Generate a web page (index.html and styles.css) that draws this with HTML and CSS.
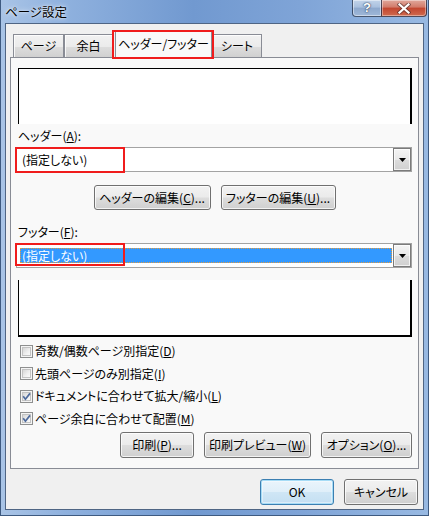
FILE: index.html
```html
<!DOCTYPE html>
<html lang="ja">
<head>
<meta charset="utf-8">
<title>ページ設定</title>
<link rel="stylesheet" href="styles.css">
</head>
<body>
<div class="window">
  <div class="titlebar">
    <span class="title">ページ設定</span>
    <div class="caption-btns">
      <div class="cbtn help">?</div>
      <div class="cbtn close">
        <svg width="14" height="11" viewBox="0 0 14 11"><path d="M2.5 1.5 L11.5 9.5 M11.5 1.5 L2.5 9.5" stroke="#3a2020" stroke-width="4" stroke-linecap="square" opacity="0.55"/><path d="M2.5 1.5 L11.5 9.5 M11.5 1.5 L2.5 9.5" stroke="#fff" stroke-width="2.2" stroke-linecap="square"/></svg>
      </div>
    </div>
  </div>
  <div class="client">
    <div class="tabs">
      <div class="tab t1">ページ</div>
      <div class="tab t2">余白</div>
      <div class="tab selected">ヘッダー/フッター</div>
      <div class="tab t4">シート</div>
    </div>
    <div class="panel">
      <div class="preview preview-top"></div>
      <div class="label">ヘッダー(<u>A</u>):</div>
      <div class="combo">
        <span class="combo-text">(指定しない)</span>
        <span class="drop"><svg width="7" height="4" viewBox="0 0 7 4"><polygon points="0,0 7,0 3.5,4" fill="#000"/></svg></span>
      </div>
      <div class="edit-row">
        <div class="btn w117">ヘッダーの編集(<u>C</u>)...</div>
        <div class="btn w115">フッターの編集(<u>U</u>)...</div>
      </div>
      <div class="label label-footer">フッター(<u>F</u>):</div>
      <div class="combo">
        <span class="combo-sel">(指定しない)</span>
        <span class="drop"><svg width="7" height="4" viewBox="0 0 7 4"><polygon points="0,0 7,0 3.5,4" fill="#000"/></svg></span>
      </div>
      <div class="preview preview-bottom"></div>
      <div class="checks">
        <div class="check-row"><span class="cb"><span class="cb-in"></span></span><span>奇数/偶数ページ別指定(<u>D</u>)</span></div>
        <div class="check-row"><span class="cb"><span class="cb-in"></span></span><span>先頭ページのみ別指定(<u>I</u>)</span></div>
        <div class="check-row"><span class="cb"><span class="cb-in"></span><svg class="tick" width="13" height="13" viewBox="0 0 13 13"><path d="M3.2 6.3 L5.4 9.2 L10 3.4" fill="none" stroke="#4e6a9c" stroke-width="1.7"/></svg></span><span>ドキュメントに合わせて拡大/縮小(<u>L</u>)</span></div>
        <div class="check-row"><span class="cb"><span class="cb-in"></span><svg class="tick" width="13" height="13" viewBox="0 0 13 13"><path d="M3.2 6.3 L5.4 9.2 L10 3.4" fill="none" stroke="#4e6a9c" stroke-width="1.7"/></svg></span><span>ページ余白に合わせて配置(<u>M</u>)</span></div>
      </div>
      <div class="print-row">
        <div class="btn w74">印刷(<u>P</u>)...</div>
        <div class="btn w107">印刷プレビュー(<u>W</u>)</div>
        <div class="btn w91">オプション(<u>O</u>)...</div>
      </div>
    </div>
    <div class="dialog-btns">
      <div class="btn big default">OK</div>
      <div class="btn big">キャンセル</div>
    </div>
  </div>
  <div class="mark mark-tab"></div>
  <div class="mark mark-header"></div>
  <div class="mark mark-footer"></div>
</div>
</body>
</html>
```
FILE: styles.css
```css
* { box-sizing: border-box; }
html, body { margin: 0; padding: 0; }
body {
  width: 429px;
  height: 516px;
  overflow: hidden;
  font-family: "Noto Sans CJK JP", "Noto Sans", sans-serif;
  font-size: 12px;
  font-feature-settings: "palt" 1;
  color: #000;
  background: #fff;
}
u { text-decoration: underline; text-underline-offset: 1px; }

.window {
  position: relative;
  width: 429px;
  height: 516px;
  padding: 0 4px 5px 4px;
  display: flex;
  flex-direction: column;
  background: linear-gradient(to right, #a9c4e6 0%, #8fb1de 15%, #7199d0 45%, #7fa4d7 70%, #98b9e2 100%);
  border: 1px solid #3e5a80;
  border-top: none;
}

.titlebar {
  height: 23px;
  display: flex;
  justify-content: space-between;
  align-items: flex-start;
  margin: 0 -3px 0 -3px;
}
.title {
  padding: 3px 0 0 3px;
  line-height: 17px;
  font-size: 12.5px;
  color: #000;
  text-shadow: 0 0 5px rgba(255,255,255,0.9), 0 0 2px rgba(255,255,255,0.7);
}
.caption-btns { display: flex; margin-right: 0; }
.cbtn {
  height: 17px;
  display: flex;
  align-items: center;
  justify-content: center;
  border: 1px solid rgba(30,45,70,0.75);
  border-top: none;
}
.help {
  width: 29px;
  border-right: none;
  border-radius: 0 0 0 4px;
  background: linear-gradient(#c2d4ea 0%, #a9c0de 45%, #8da8cd 50%, #9fb8d9 100%);
  color: #fff;
  font-family: "Liberation Sans", sans-serif;
  font-weight: bold;
  font-size: 13px;
  line-height: 14px;
  text-shadow: 0 0 2px #2c3e5c, 0 0 1px #2c3e5c;
  box-shadow: inset 0 0 0 1px rgba(255,255,255,0.45);
}
.close {
  width: 46px;
  border-radius: 0 0 4px 0;
  background: linear-gradient(#e0a89c 0%, #d27a69 45%, #c2452f 50%, #cf6a4e 100%);
  box-shadow: inset 0 0 0 1px rgba(255,255,255,0.4);
}

.client {
  flex: 1;
  display: flex;
  flex-direction: column;
  background: #f0f0f0;
  border: 1px solid #4f6584;
}

.tabs {
  margin-top: 7px;
  padding-left: 7px;
  height: 27px;
  display: flex;
  align-items: flex-end;
}
.tab {
  height: 24px;
  border: 1px solid #898c95;
  border-bottom: none;
  background: linear-gradient(#f2f2f2 0%, #ebebeb 50%, #dddddd 51%, #cfcfcf 100%);
  display: flex;
  align-items: flex-start;
  justify-content: center;
  padding-top: 3px;
  line-height: 16px;
  box-shadow: inset 1px 1px 0 rgba(255,255,255,0.8);
}
.t1 { width: 51px; }
.t2 { width: 49px; }
.t4 { width: 50px; }
.tab.selected {
  position: relative;
  z-index: 2;
  width: 97px;
  height: 27px;
  margin-left: 2px;
  padding-top: 4px;
  background: #f9f9f9;
  box-shadow: none;
}

.panel {
  position: relative;
  z-index: 1;
  margin: -1px 0 0 4px;
  width: 409px;
  height: 412px;
  border: 1px solid #898c95;
  background: #f9f9f9;
  display: flex;
  flex-direction: column;
}

.preview { background: #fff; margin-left: 7px; width: 394px; }
.preview-top {
  margin-top: 10px;
  height: 56px;
  border-top: 1px solid #000;
  border-left: 1px solid #000;
  border-right: 2px solid #000;
}
.preview-bottom {
  margin-top: 12px;
  height: 57px;
  border-left: 1px solid #000;
  border-right: 2px solid #000;
  border-bottom: 2px solid #000;
}

.label {
  margin: 4px 0 0 7px;
  height: 16px;
  line-height: 16px;
}
.label-footer { margin-top: 14px; }

.combo {
  margin: 3px 0 0 5px;
  width: 396px;
  height: 25px;
  border: 1px solid #a3a3a3;
  background: #fff;
  display: flex;
  align-items: center;
}
.combo-text { padding-left: 5px; line-height: 16px; flex: 1; }
.combo-sel {
  margin-left: 3px;
  width: 372px;
  height: 15px;
  line-height: 13px;
  padding-left: 1px;
  background: #3399ff;
  color: #fff;
  border: 1px dotted #e59b3c;
}
.drop {
  margin-left: auto;
  width: 18px;
  height: 23px;
  border: 1px solid #7b7b7b;
  background: linear-gradient(#f4f4f4 0%, #e9e9e9 50%, #dcdcdc 51%, #d0d0d0 100%);
  box-shadow: inset 0 0 0 1px rgba(255,255,255,0.7);
  display: flex;
  align-items: center;
  justify-content: center;
}

.btn {
  height: 25px;
  border: 1px solid #707070;
  border-radius: 3px;
  background: linear-gradient(#f2f2f2 0%, #ebebeb 48%, #dddddd 52%, #cfcfcf 100%);
  box-shadow: inset 0 0 0 1px rgba(255,255,255,0.75);
  display: flex;
  align-items: center;
  justify-content: center;
  line-height: 16px;
  white-space: nowrap;
}
.w117 { width: 117px; }
.w115 { width: 115px; }
.w74 { width: 74px; }
.w107 { width: 107px; }
.w91 { width: 91px; }

.edit-row {
  margin-top: 13px;
  display: flex;
  justify-content: center;
  gap: 10px;
}

.checks { margin-top: 3px; display: flex; flex-direction: column; }
.check-row {
  height: 22.5px;
  display: flex;
  align-items: center;
  padding-left: 9px;
  gap: 2px;
  line-height: 16px;
}
.cb {
  position: relative;
  width: 13px;
  height: 13px;
  border: 1px solid #8e8f8f;
  background: #f4f4f4;
  display: flex;
  align-items: center;
  justify-content: center;
  flex: none;
}
.cb-in {
  width: 9px;
  height: 9px;
  border: 1px solid #c3c3c3;
  background: linear-gradient(135deg, #d6d6d6 0%, #f0f0f0 60%, #fafafa 100%);
}
.tick { position: absolute; left: -1px; top: -1px; }

.print-row {
  margin-top: 2px;
  padding-right: 6px;
  display: flex;
  justify-content: flex-end;
  gap: 10px;
}
.print-row .btn { height: 26px; }

.dialog-btns {
  margin-top: 10px;
  padding-right: 5px;
  display: flex;
  justify-content: flex-end;
  gap: 10px;
}
.btn.big { width: 74px; height: 26px; }
.btn.default {
  border-color: #3c7fb1;
  box-shadow: inset 0 0 0 1px #a6dcf6, inset 0 0 0 2px rgba(255,255,255,0.4);
  background: linear-gradient(#eaf5fc 0%, #e0eff9 48%, #cfe6f5 52%, #c4dff2 100%);
}

.mark {
  position: absolute;
  border: 2px solid #f01c1c;
  pointer-events: none;
  z-index: 5;
}
.mark-tab { left: 111px; top: 30px; width: 102px; height: 29px; }
.mark-header { left: 14px; top: 147px; width: 110px; height: 26px; }
.mark-footer { left: 14px; top: 243px; width: 110px; height: 23px; }
```
